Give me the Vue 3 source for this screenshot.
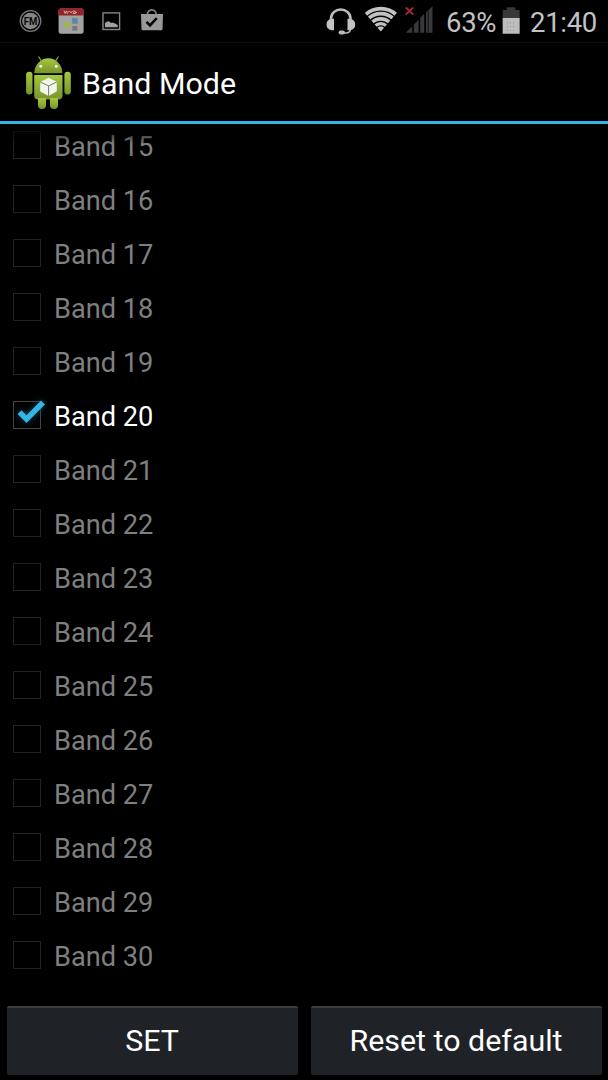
<template>
  <div class="screen">
    <header class="status-bar">
      <div class="notifications">
        <svg class="icon-fm" width="24" height="42" viewBox="18 0 24 42">
          <circle cx="30.5" cy="21" r="10.3" fill="none" stroke="#777" stroke-width="1.3" />
          <circle cx="30.5" cy="21" r="8.3" fill="#858585" />
          <text x="30.5" y="24.7" text-anchor="middle" textLength="13.6" lengthAdjust="spacingAndGlyphs">FM</text>
        </svg>
        <svg class="icon-calendar" width="26" height="42" viewBox="58 0 26 42">
          <rect x="58.6" y="8.5" width="25" height="25.3" rx="2.5" fill="#a3a3a3" />
          <path d="M58.3 15.5V10.5Q58.3 8.2 60.8 8.2H81.4Q83.9 8.2 83.9 10.5V15.5Z" fill="#962329" />
          <path d="M64 10.5l1 3 1.2-2.5 1.2 2.5 1-2.5M69.5 11l1.5 2 1.5-2M73 11h2l-2 2.5h2.5V11.5l1.5 1.5" fill="none" stroke="#b9a6a7" stroke-width="1" />
          <rect x="72.3" y="18.3" width="5" height="5" fill="#4b8eac" stroke="#7b858c" stroke-width=".8" />
          <rect x="64.5" y="22.6" width="4.8" height="4.8" fill="#9bbd31" />
          <rect x="72.3" y="26" width="5" height="4.5" fill="#777" />
        </svg>
        <svg class="icon-picture" width="19" height="42" viewBox="102 0 19 42">
          <rect x="103" y="12.9" width="16.6" height="16.6" fill="none" stroke="#858585" stroke-width="1.4" />
          <path d="M105 27.3V23.2l2-1.7h2.5l1.5 1.5 1.5-.4 2.5 1 2.7 1.4v2.3Z" fill="#a0a0a0" />
        </svg>
        <svg class="icon-bag" width="23" height="42" viewBox="141 0 23 42">
          <path d="M147.4 15v-.7a4.4 4.4 0 0 1 8.8 0V15" fill="none" stroke="#858585" stroke-width="1.6" />
          <path d="M141 14h22l-.5 15.3q-.1 1-1.1 1h-18.8q-1 0-1.1-1Z" fill="#999" />
          <path d="M146.5 21.8l3.5 3.6 6.8-7.3" fill="none" stroke="#050505" stroke-width="2.5" />
        </svg>
      </div>

      <div class="indicators">
        <svg class="icon-headset" width="30" height="42" viewBox="326 0 30 42">
          <path d="M331 21v-2.5a9.7 9 0 0 1 19.5 0V21" fill="none" stroke="#bbb" stroke-width="2.6" />
          <path d="M334 18.8v11.4h-2.5q-5-1-5-5.7t5-5.7ZM347.5 18.8v11.4h2.7q5-1 5-5.7t-5-5.7Z" fill="#c2c2c2" />
          <path d="M350.5 29.5q-.5 3.5-5 3.5H343" fill="none" stroke="#b5b5b5" stroke-width="1.7" />
          <rect x="338.6" y="30.6" width="6.3" height="4" rx="2" fill="#bbb" />
        </svg>
        <svg class="icon-wifi" width="34" height="42" viewBox="364 0 34 42">
          <defs>
            <clipPath id="fan"><path d="M380.8 31.6L363 10.8V4h35.6v6.8Z" /></clipPath>
          </defs>
          <g clip-path="url(#fan)" fill="none" stroke="#c2c2c2" stroke-width="3.8">
            <circle cx="380.8" cy="31.5" r="22.8" />
            <circle cx="380.8" cy="31.5" r="17.8" />
            <circle cx="380.8" cy="31.5" r="12.7" />
            <circle cx="380.8" cy="31.5" r="7.9" stroke-width="3.4" />
            <circle cx="380.8" cy="31.5" r="2.5" stroke-width="5" />
          </g>
        </svg>
        <svg class="icon-signal" width="29" height="42" viewBox="405 0 29 42">
          <path d="M405.8 7.5l7.5 7M413.3 7.5l-7.5 7" stroke="#a12a32" stroke-width="1.8" />
          <path d="M405.7 32.7l6.5-6.3v6.3ZM413.8 32.7v-8l4.8-5v13ZM420.2 32.7V18l4-4.2v18.9ZM426 32.7V12.2l6.5-6v26.5Z" fill="#39393b" />
          <path d="M428.2 10v22.7" stroke="#151515" stroke-width="1" />
        </svg>
        <span class="percent">63%</span>
        <svg class="icon-battery" width="18" height="42" viewBox="502 0 18 42">
          <path d="M502.7 33.5V10h4V7.2h8.6V10h4.3v23.5Z" fill="#39393b" />
          <rect x="502.7" y="18" width="16.9" height="15.7" fill="#bdbdbd" />
          <path d="M507 22.8h9M507 26.7h9M507 30.5h9" stroke="#969696" stroke-width="1" stroke-dasharray="1 2" />
        </svg>
        <span class="clock">21:40</span>
      </div>
    </header>

    <div class="action-bar">
      <svg class="app-icon" width="48" height="54" viewBox="25 55 48 54">
        <defs>
          <linearGradient id="droid" x1="0" y1="0" x2="0" y2="1">
            <stop offset="0" stop-color="#a6c83d" />
            <stop offset="1" stop-color="#76942d" />
          </linearGradient>
        </defs>
        <g fill="url(#droid)">
          <path d="M34.3 73.3a14 15 0 0 1 28.1 0Z" />
          <path d="M34.2 75h28.3v20.5q0 4-4 4H38.2q-4 0-4-4Z" />
          <rect x="26.1" y="71.8" width="6.4" height="22.6" rx="3" />
          <rect x="64.4" y="71.8" width="6.4" height="22.6" rx="3" />
          <path d="M38 98h8v8q-.5 3-4 3t-4-3ZM50 98h8v8q-.5 3-4 3t-4-3Z" />
        </g>
        <path d="M38.5 56.5l3.2 4.8M58.5 56.5l-3.2 4.8" stroke="#7f9c38" stroke-width="1.3" />
        <circle cx="40.8" cy="66.3" r="1.4" fill="#fff" />
        <circle cx="56.3" cy="66.3" r="1.4" fill="#fff" />
        <path d="M48.5 77.8l8.3 4v9.5l-8.1 4.8-8.5-4.6v-9.6Z" fill="#f3f5ef" />
        <path d="M40.2 81.9l8.4 4 8.2-4M48.6 85.9v10" fill="none" stroke="#657357" stroke-width=".9" />
      </svg>
      <h1 class="title">Band Mode</h1>
    </div>

    <main class="band-list">
      <label v-for="band in bands" :key="band.id" class="band-row" :class="{ checked: band.checked }">
        <input v-model="band.checked" type="checkbox" class="band-input">
        <span class="box">
          <svg v-if="band.checked" class="tick" width="36" height="32" viewBox="0 0 36 32">
            <path d="M7.5 17.2l7 7L31 7.5" />
          </svg>
        </span>
        <span class="band-name">Band {{ band.id }}</span>
      </label>
    </main>

    <footer class="actions">
      <button class="action-btn">SET</button>
      <button class="action-btn" @click="reset">Reset to default</button>
    </footer>
  </div>
</template>

<script setup>
import { ref } from 'vue'

const FIRST_BAND = 15
const LAST_BAND = 30
const DEFAULT_BAND = 20

const bands = ref([])

function reset() {
  bands.value = Array.from({ length: LAST_BAND - FIRST_BAND + 1 }, (_, i) => ({
    id: FIRST_BAND + i,
    checked: FIRST_BAND + i === DEFAULT_BAND
  }))
}

reset()
</script>

<style>
body {
  margin: 0;
  background: #000;
}
</style>

<style scoped>
.screen {
  display: flex;
  flex-direction: column;
  height: 1080px;
  overflow: hidden;
  background: #000;
  color: #fff;
  font-family: Roboto, sans-serif;
}

.status-bar {
  display: flex;
  justify-content: space-between;
  box-sizing: border-box;
  height: 43px;
  padding: 0 10px 0 18px;
  border-bottom: 1px solid #0e0e0e;
}

.status-bar svg {
  display: block;
  flex: none;
}

.notifications,
.indicators {
  display: flex;
}

.icon-fm text {
  font-size: 10.5px;
  font-weight: 700;
  fill: #080808;
}

.icon-calendar {
  margin-left: 16px;
}

.icon-picture {
  margin-left: 18px;
}

.icon-bag {
  margin-left: 20px;
}

.icon-wifi {
  margin-left: 8px;
}

.icon-signal {
  margin-left: 7px;
}

.percent,
.clock {
  color: #c2c2c2;
  font-size: 27.5px;
  line-height: 45px;
  letter-spacing: -0.3px;
  white-space: nowrap;
}

.percent {
  width: 56px;
  margin-left: 12px;
}

.clock {
  width: 68px;
  margin-left: 10px;
}

.action-bar {
  display: flex;
  align-items: center;
  box-sizing: border-box;
  height: 81px;
  padding-left: 25px;
  border-bottom: 3px solid #33b5e5;
}

.title {
  margin: 4px 0 0 9px;
  font-size: 30.4px;
  font-weight: 400;
  line-height: 36px;
}

.band-list {
  position: relative;
  flex: none;
  height: 877px;
  overflow: hidden;
}

/* fading edge under the action bar */
.band-list::before {
  content: '';
  position: absolute;
  inset: 0 0 auto;
  z-index: 1;
  height: 20px;
  background: linear-gradient(#000, transparent);
}

.band-row {
  display: flex;
  align-items: center;
  height: 54px;
  padding-left: 13px;
  color: #7f7f7f;
  font-size: 27.2px;
}

.band-row:first-child {
  margin-top: -5px;
}

.band-row.checked {
  color: #fff;
}

.band-input {
  display: none;
}

.box {
  position: relative;
  box-sizing: border-box;
  width: 28px;
  height: 28px;
  margin-bottom: 2px;
  border: 1px solid #222;
}

.checked .box {
  border-color: #444;
}

.tick {
  position: absolute;
  top: -7px;
  left: -2px;
}

.tick path {
  fill: none;
  stroke: #33b5e5;
  stroke-width: 5.4;
  filter: drop-shadow(0 0 3px #185064);
}

.band-name {
  margin: 1px 0 0 13px;
}

.actions {
  display: grid;
  grid-template-columns: 291px 291px;
  gap: 13px;
  padding: 5px 6.5px 0;
}

.action-btn {
  height: 68.5px;
  padding: 0 0 2px;
  border: 0;
  border-top: 2px solid #3b3d3f;
  border-radius: 2px;
  background: #1f2226;
  color: #fff;
  font: 30.4px Roboto, sans-serif;
}
</style>
